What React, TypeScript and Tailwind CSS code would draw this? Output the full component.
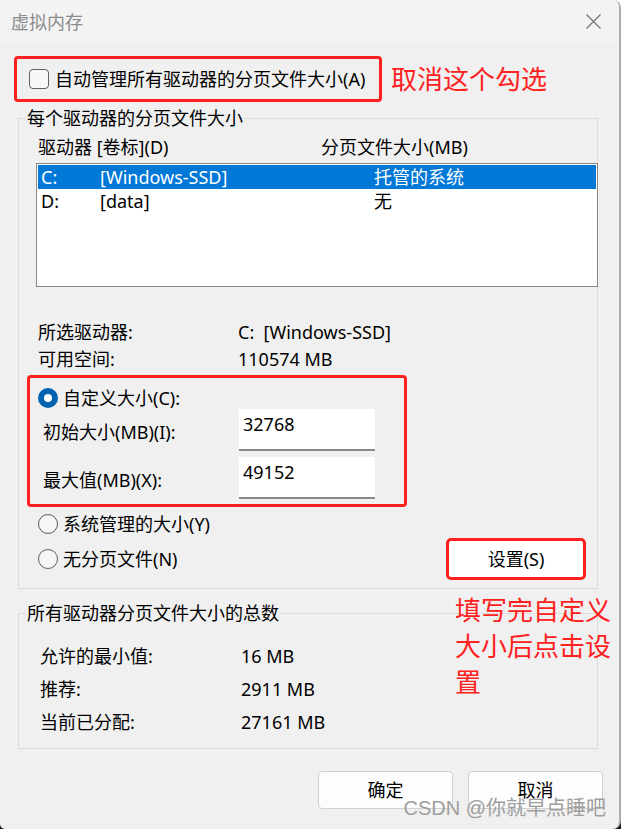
import React from "react";

function Radio({ checked }: { checked?: boolean }) {
  return checked ? (
    <span className="w-5 h-5 rounded-full bg-[#0063b1] flex items-center justify-center shrink-0">
      <span className="w-[8px] h-[8px] rounded-full bg-white" />
    </span>
  ) : (
    <span className="w-5 h-5 rounded-full border border-[#5c5c5c] bg-[#f6f6f6] shrink-0" />
  );
}

export default function App() {
  return (
    <div className="w-[621px] h-[829px] bg-[linear-gradient(to_bottom,#ffffff_50%,#161616_50%)] font-['Noto_Sans','Noto_Sans_CJK_SC',sans-serif] text-[18px] leading-[24px] text-black">
      <div className="relative h-full flex flex-col bg-[#f0f0f0] rounded-tr-[8px] rounded-br-[8px] rounded-bl-[5px] border-r-2 border-[#adadad] overflow-hidden">
        {/* Title bar */}
        <div className="h-[43px] shrink-0 bg-[#f3f3f3] flex items-center justify-between pl-[11px] pr-[18px]">
          <span className="text-[#8c8c8c]">虚拟内存</span>
          <svg width="15" height="15" viewBox="0 0 15 15" className="mb-[1px]">
            <path d="M0.5 0.5 L14.5 14.5 M14.5 0.5 L0.5 14.5" stroke="#707070" strokeWidth="1.1" fill="none" />
          </svg>
        </div>

        {/* Auto manage row */}
        <div className="mt-[13px] flex items-center">
          <div className="ml-[14px] w-[368px] h-[46px] border-[3px] border-[#ff2020] rounded-[4px] flex items-center pl-[12px] gap-[6px]">
            <span className="w-5 h-5 rounded-[4px] border border-[#5f5f5f] bg-[#f7f7f7] shrink-0" />
            <span>自动管理所有驱动器的分页文件大小(A)</span>
          </div>
          <span className="ml-[9px] text-[26px] leading-[36px] text-[#ff2020]">取消这个勾选</span>
        </div>

        {/* Group 1 */}
        <fieldset className="mt-[4px] ml-[18px] w-[580px] min-w-0 border border-[#dcdcdc] pb-[8px]">
          <legend className="ml-[7px] px-[1px] leading-[24px]">每个驱动器的分页文件大小</legend>
          <div className="mt-[5px] ml-[19px] h-[24px] flex">
            <span className="w-[283px]">驱动器 [卷标](D)</span>
            <span>分页文件大小(MB)</span>
          </div>
          <div className="mt-[4px] ml-[17px] w-[562px] h-[124px] border border-[#878787] bg-white p-[1px]">
            <div className="h-[24px] flex items-center pl-[3px] bg-[#0078d7] text-white">
              <span className="w-[59px]">C:</span>
              <span className="w-[274px]">[Windows-SSD]</span>
              <span>托管的系统</span>
            </div>
            <div className="h-[24px] flex items-center pl-[3px]">
              <span className="w-[59px]">D:</span>
              <span className="w-[274px]">[data]</span>
              <span>无</span>
            </div>
          </div>
          <div className="mt-[31px] ml-[19px] h-[27px] flex items-center">
            <span className="w-[200px]">所选驱动器:</span>
            <span className="whitespace-pre">C:  [Windows-SSD]</span>
          </div>
          <div className="ml-[19px] h-[27px] flex items-center">
            <span className="w-[200px]">可用空间:</span>
            <span>110574 MB</span>
          </div>

          <div className="mt-[3px] ml-[8px] w-[380px] h-[132px] border-[3px] border-[#ff2020] rounded-[4px] flex flex-col">
            <div className="mt-[9px] ml-[8px] h-[22px] flex items-center gap-[5px]">
              <Radio checked />
              <span>自定义大小(C):</span>
            </div>
            <div className="ml-[13px] flex">
              <span className="w-[196px] h-[42px] flex items-center pt-[4px]">初始大小(MB)(I):</span>
              <div className="w-[136px] h-[42px] bg-white border-b-2 border-[#8a8a8a] pl-[4px] pt-[3px]">32768</div>
            </div>
            <div className="mt-[6px] ml-[13px] flex">
              <span className="w-[196px] h-[42px] flex items-center pt-[4px]">最大值(MB)(X):</span>
              <div className="w-[136px] h-[42px] bg-white border-b-2 border-[#8a8a8a] pl-[4px] pt-[3px]">49152</div>
            </div>
          </div>

          <div className="mt-[5px] ml-[19px] h-[24px] flex items-center gap-[5px]">
            <Radio />
            <span>系统管理的大小(Y)</span>
          </div>
          <div className="mt-[2px] ml-[19px] mr-[11px] h-[42px] flex items-center justify-between">
            <div className="flex items-center gap-[5px]">
              <Radio />
              <span>无分页文件(N)</span>
            </div>
            <div className="w-[140px] h-[42px] border-[3px] border-[#ff2020] rounded-[5px] bg-white flex items-center justify-center">
              设置(S)
            </div>
          </div>
        </fieldset>

        {/* Group 2 */}
        <fieldset className="mt-[12px] ml-[18px] w-[580px] min-w-0 border border-[#dcdcdc] pb-[10px]">
          <legend className="ml-[7px] px-[1px] leading-[24px]">所有驱动器分页文件大小的总数</legend>
          <div className="mt-[14px] ml-[21px] h-[33px] flex items-center">
            <span className="w-[201px]">允许的最小值:</span>
            <span>16 MB</span>
          </div>
          <div className="ml-[21px] h-[33px] flex items-center">
            <span className="w-[201px]">推荐:</span>
            <span>2911 MB</span>
          </div>
          <div className="ml-[21px] h-[33px] flex items-center">
            <span className="w-[201px]">当前已分配:</span>
            <span>27161 MB</span>
          </div>
        </fieldset>

        {/* Buttons */}
        <div className="mt-[22px] mr-[16px] flex justify-end gap-[15px]">
          <div className="w-[135px] h-[38px] rounded-[4px] border border-[#d1d1d1] bg-[#fdfdfd] flex items-center justify-center">确定</div>
          <div className="w-[135px] h-[38px] rounded-[4px] border border-[#d1d1d1] bg-[#fdfdfd] flex items-center justify-center">取消</div>
        </div>

        {/* Annotation overlay */}
        <div className="absolute left-[455px] top-[592px] w-[160px] text-[26px] leading-[36px] text-[#ff2020]">
          填写完自定义大小后点击设置
        </div>

        {/* Watermark */}
        <div className="absolute right-[13px] top-[796px] text-[20px] leading-[24px] text-[#9e9e9e] font-['Liberation_Sans','Noto_Sans_CJK_SC',sans-serif] whitespace-nowrap">
          CSDN @你就早点睡吧
        </div>
      </div>
    </div>
  );
}
